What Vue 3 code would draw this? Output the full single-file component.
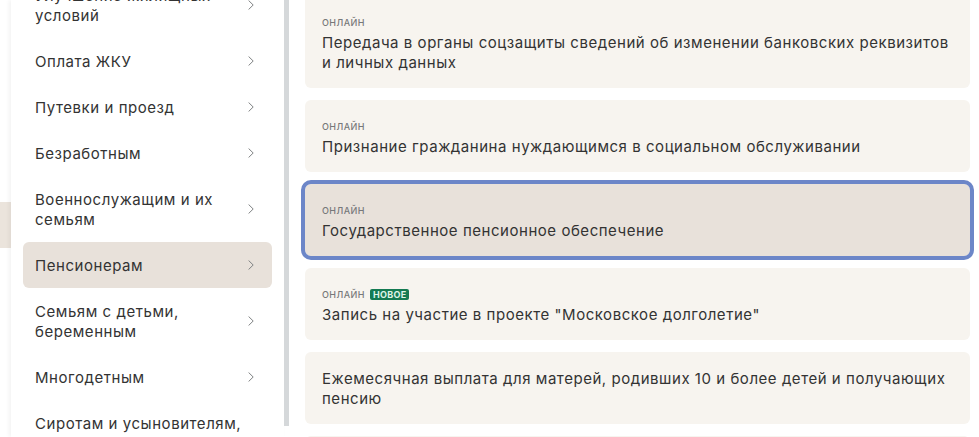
<script setup>
const menu = [
  { label: 'Улучшение жилищных условий', size: 'two' },
  { label: 'Оплата ЖКУ' },
  { label: 'Путевки и проезд' },
  { label: 'Безработным' },
  { label: 'Военнослужащим и их семьям', size: 'two' },
  { label: 'Пенсионерам', active: true },
  { label: 'Семьям с детьми, беременным', size: 'two' },
  { label: 'Многодетным' },
  { label: 'Сиротам и усыновителям, опекунам и приёмным родителям', size: 'three' }
]
const cards = [
  { online: true, text: 'Передача в органы соцзащиты сведений об изменении банковских реквизитов и личных данных' },
  { online: true, text: 'Признание гражданина нуждающимся в социальном обслуживании' },
  { online: true, text: 'Государственное пенсионное обеспечение', selected: true },
  { online: true, isNew: true, text: 'Запись на участие в проекте "Московское долголетие"' },
  { text: 'Ежемесячная выплата для матерей, родивших 10 и более детей и получающих пенсию' },
  { text: '' }
]
</script>

<template>
  <div class="page">
    <div class="edge"><div class="edge-band"></div></div>
    <aside class="sidebar">
      <ul class="menu">
        <li v-for="m in menu" :key="m.label" class="item" :class="[m.size, { active: m.active }]">
          <span class="label">{{ m.label }}</span>
          <svg class="chev" width="6" height="10" viewBox="0 0 6 10"><path d="M.6.5l4.6 4.5L.6 9.5" fill="none" stroke="#7f8283" stroke-width="1"/></svg>
        </li>
      </ul>
    </aside>
    <div class="scrollbar"></div>
    <main class="cards">
      <article v-for="(c, i) in cards" :key="i" class="card" :class="{ selected: c.selected, plain: !c.online }">
        <div v-if="c.online" class="meta">
          <span class="online">ОНЛАЙН</span>
          <span v-if="c.isNew" class="new">НОВОЕ</span>
        </div>
        <div class="title">{{ c.text }}</div>
      </article>
    </main>
  </div>
</template>

<style>
html, body { margin: 0; background: #fff; overflow: hidden; }
</style>

<style scoped>
.page {
  display: flex;
  height: 437px;
  width: 979px;
  overflow: hidden;
  font-family: Inter, "Liberation Sans", sans-serif;
  color: #333;
  background: #fff;
}
.edge { width: 11px; flex: none; }
.edge-band { margin-top: 202px; height: 46px; background: #ebe4dc; }
.sidebar {
  width: 273px;
  flex: none;
  background: #fff;
  box-shadow: -2px 0 4px rgba(0, 0, 0, 0.05);
  padding: 0 12px;
  box-sizing: border-box;
  overflow: hidden;
}
.menu { list-style: none; margin: -28px 0 0; padding: 0; }
.item {
  display: flex;
  align-items: center;
  justify-content: space-between;
  height: 46px;
  padding: 0 18px 0 12px;
  border-radius: 6px;
  box-sizing: border-box;
}
.item.two { height: 66px; }
.item.three { height: 86px; }
.item.active { background: #e8e1da; }
.label {
  width: 210px;
  padding-top: 2px;
  font-size: 15px;
  line-height: 20px;
  letter-spacing: 0.55px;
}
.chev { flex: none; }
.scrollbar { width: 5px; height: 426px; flex: none; background: #d5d8da; }
.cards {
  margin: -16px 0 0 16px;
  width: 665px;
  flex: none;
  display: flex;
  flex-direction: column;
  gap: 12px;
}
.card {
  flex: none;
  min-height: 72px;
  box-sizing: border-box;
  padding: 19px 17px 0;
  background: #f7f4ef;
  border-radius: 6px;
}
.card:first-child { height: 104px; padding-top: 31px; }
.card.selected {
  background: #e8e1da;
  outline: 4px solid #6c86c8;
  outline-offset: 0;
}
.card.plain { padding-top: 17px; }
.meta { display: flex; align-items: center; gap: 5px; height: 14px; margin-bottom: 4px; }
.online { font-size: 9px; letter-spacing: 0.45px; font-weight: 500; color: #77787a; }
.new {
  font-size: 9px;
  font-weight: 700;
  letter-spacing: 0.3px;
  line-height: 11px;
  padding: 0 3px;
  color: #dff3e8;
  background: #147a52;
  border-radius: 2px;
}
.title { font-size: 15px; line-height: 20px; letter-spacing: 0.54px; }
</style>
